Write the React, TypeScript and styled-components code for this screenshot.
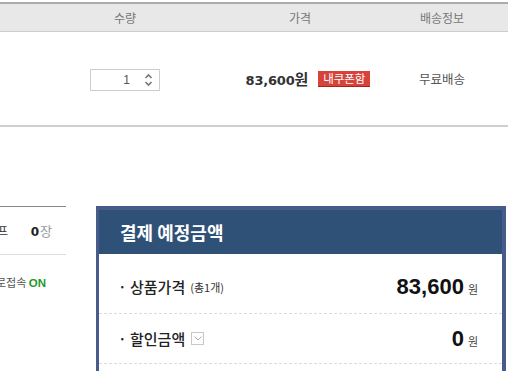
import styled, { createGlobalStyle } from "styled-components";

const GlobalStyle = createGlobalStyle`
  body {
    margin: 0;
    background: #fff;
    font-family: "Noto Sans CJK KR", "Noto Sans", sans-serif;
    overflow: hidden;
  }
`;

export default function App() {
  return (
    <>
      <GlobalStyle />
      <Page>
        <CartTable>
          <HeadRow>
            <HeadCell $w={50} />
            <HeadCell $w={150}>수량</HeadCell>
            <HeadCell $w={200}>가격</HeadCell>
            <HeadCell $w={84}>배송정보</HeadCell>
            <HeadCell $w={24} />
          </HeadRow>
          <BodyRow>
            <BodyCell $w={50} />
            <BodyCell $w={150}>
              <QtyBox>
                <QtyValue>1</QtyValue>
                <Spinner>
                  <svg width="9" height="14" viewBox="0 0 9 14">
                    <path d="M1.5 5 L4.5 2 L7.5 5" fill="none" stroke="#777" strokeWidth="1.6" />
                    <path d="M1.5 9 L4.5 12 L7.5 9" fill="none" stroke="#777" strokeWidth="1.6" />
                  </svg>
                </Spinner>
              </QtyBox>
            </BodyCell>
            <PriceCell $w={200}>
              <Price>
                83,600<Won>원</Won>
              </Price>
              <CouponBadge>내쿠폰함</CouponBadge>
            </PriceCell>
            <ShipCell $w={84}>무료배송</ShipCell>
            <BodyCell $w={24} />
          </BodyRow>
        </CartTable>

        <Bottom>
          <SideBox>
            <SideRow>
              <SideLabel>프</SideLabel>
              <SideCount>
                <b>0</b>장
              </SideCount>
            </SideRow>
            <SideStatus>
              로접속 <On>ON</On>
            </SideStatus>
          </SideBox>

          <PayPanel>
            <PayHeader>결제 예정금액</PayHeader>
            <PayRow $first>
              <PayLabel>
                · 상품가격 <Small>(총1개)</Small>
              </PayLabel>
              <PayValue>
                83,600<Unit>원</Unit>
              </PayValue>
            </PayRow>
            <PayRow>
              <PayLabel>
                · 할인금액
                <ToggleBox>
                  <svg width="8" height="5" viewBox="0 0 8 5">
                    <path d="M0.5 0.5 L4 4 L7.5 0.5" fill="none" stroke="#aaa" strokeWidth="1" />
                  </svg>
                </ToggleBox>
              </PayLabel>
              <PayValue>
                0<Unit>원</Unit>
              </PayValue>
            </PayRow>
            <PayRow />
          </PayPanel>
        </Bottom>
      </Page>
    </>
  );
}

const Page = styled.div`
  width: 508px;
  padding-top: 2px;
`;

const CartTable = styled.div`
  border-top: 2px solid #acacac;
  border-bottom: 2px solid #cfcfcf;
`;

const HeadRow = styled.div`
  display: flex;
  height: 27px;
  background: #e8e8e8;
  border-bottom: 1px solid #cdcdcd;
`;

const HeadCell = styled.div<{ $w: number }>`
  flex: 0 0 ${(p) => p.$w}px;
  display: flex;
  align-items: center;
  justify-content: center;
  font-size: 12px;
  color: #777;
`;

const BodyRow = styled.div`
  display: flex;
  height: 93px;
`;

const BodyCell = styled.div<{ $w: number }>`
  flex: 0 0 ${(p) => p.$w}px;
  display: flex;
  align-items: center;
  justify-content: center;
`;

const PriceCell = styled(BodyCell)`
  gap: 10px;
  padding-left: 16px;
  box-sizing: border-box;
`;

const ShipCell = styled(BodyCell)`
  font-size: 12.5px;
  color: #555;
`;

const QtyBox = styled.div`
  width: 70px;
  height: 22px;
  box-sizing: border-box;
  border: 1px solid #cdcdcd;
  display: flex;
  align-items: center;
  justify-content: flex-end;
  padding-right: 6px;
  gap: 14px;
  margin-top: 3px;
`;

const QtyValue = styled.span`
  font-family: "Liberation Sans", Arial, sans-serif;
  font-size: 12px;
  color: #555;
`;

const Spinner = styled.span`
  display: flex;
`;

const Price = styled.span`
  font-family: "DejaVu Sans", sans-serif;
  font-weight: bold;
  font-size: 13px;
  color: #333;
  letter-spacing: -0.2px;
`;

const Won = styled.span`
  font-family: "Noto Sans CJK KR", sans-serif;
  font-size: 15px;
`;

const CouponBadge = styled.span`
  background: #d6433a;
  border-bottom: 1px solid #a8231d;
  color: #fff;
  font-size: 11.5px;
  line-height: 15px;
  padding: 0 5px;
`;

const Bottom = styled.div`
  display: flex;
  align-items: flex-start;
  gap: 30px;
  margin-top: 79px;
`;

const SideBox = styled.div`
  flex: 0 0 66px;
  border-top: 1px solid #8a8a8a;
`;

const SideRow = styled.div`
  display: flex;
  justify-content: space-between;
  align-items: center;
  height: 47px;
  border-bottom: 1px solid #dcdcdc;
  font-size: 12px;
  color: #333;
  padding-right: 14px;
`;

const SideLabel = styled.span`
  margin-left: -3px;
`;

const SideCount = styled.span`
  color: #999;
  font-size: 13px;
  b {
    color: #222;
    font-family: "DejaVu Sans", sans-serif;
    font-size: 12px;
    margin-right: 1px;
  }
`;

const SideStatus = styled.div`
  margin-top: 19px;
  margin-left: -4px;
  font-size: 11px;
  color: #555;
  white-space: nowrap;
`;

const On = styled.span`
  font-family: "Liberation Sans", Arial, sans-serif;
  font-weight: bold;
  color: #1f9a1f;
  font-size: 11.5px;
`;

const PayPanel = styled.div`
  flex: 0 0 410px;
  box-sizing: border-box;
  border: 4px solid #475c8b;
  border-left-width: 3px;
  background: #fff;
  height: 300px;
`;

const PayHeader = styled.div`
  height: 44px;
  background: #2f5178;
  color: #fff;
  font-size: 18px;
  font-weight: bold;
  display: flex;
  align-items: center;
  padding-left: 21px;
`;

const PayRow = styled.div<{ $first?: boolean }>`
  height: ${(p) => (p.$first ? 60 : 50)}px;
  padding-top: ${(p) => (p.$first ? 6 : 0)}px;
  box-sizing: border-box;
  display: flex;
  align-items: center;
  justify-content: space-between;
  padding-left: 19px;
  padding-right: 24px;
  border-bottom: 1px dashed #dcdcdc;
`;

const PayLabel = styled.div`
  display: flex;
  align-items: center;
  font-size: 15px;
  font-weight: 500;
  color: #222;
`;

const Small = styled.span`
  font-size: 11px;
  font-weight: normal;
  margin-left: 5px;
  color: #333;
`;

const ToggleBox = styled.span`
  width: 11px;
  height: 11px;
  border: 1px solid #c8c8c8;
  display: inline-flex;
  align-items: center;
  justify-content: center;
  margin-left: 6px;
`;

const PayValue = styled.div`
  font-family: "Liberation Sans", Arial, sans-serif;
  font-weight: bold;
  font-size: 22px;
  color: #111;
  display: flex;
  align-items: baseline;
`;

const Unit = styled.span`
  font-family: "Noto Sans CJK KR", sans-serif;
  font-weight: normal;
  font-size: 11px;
  color: #444;
  margin-left: 4px;
`;
